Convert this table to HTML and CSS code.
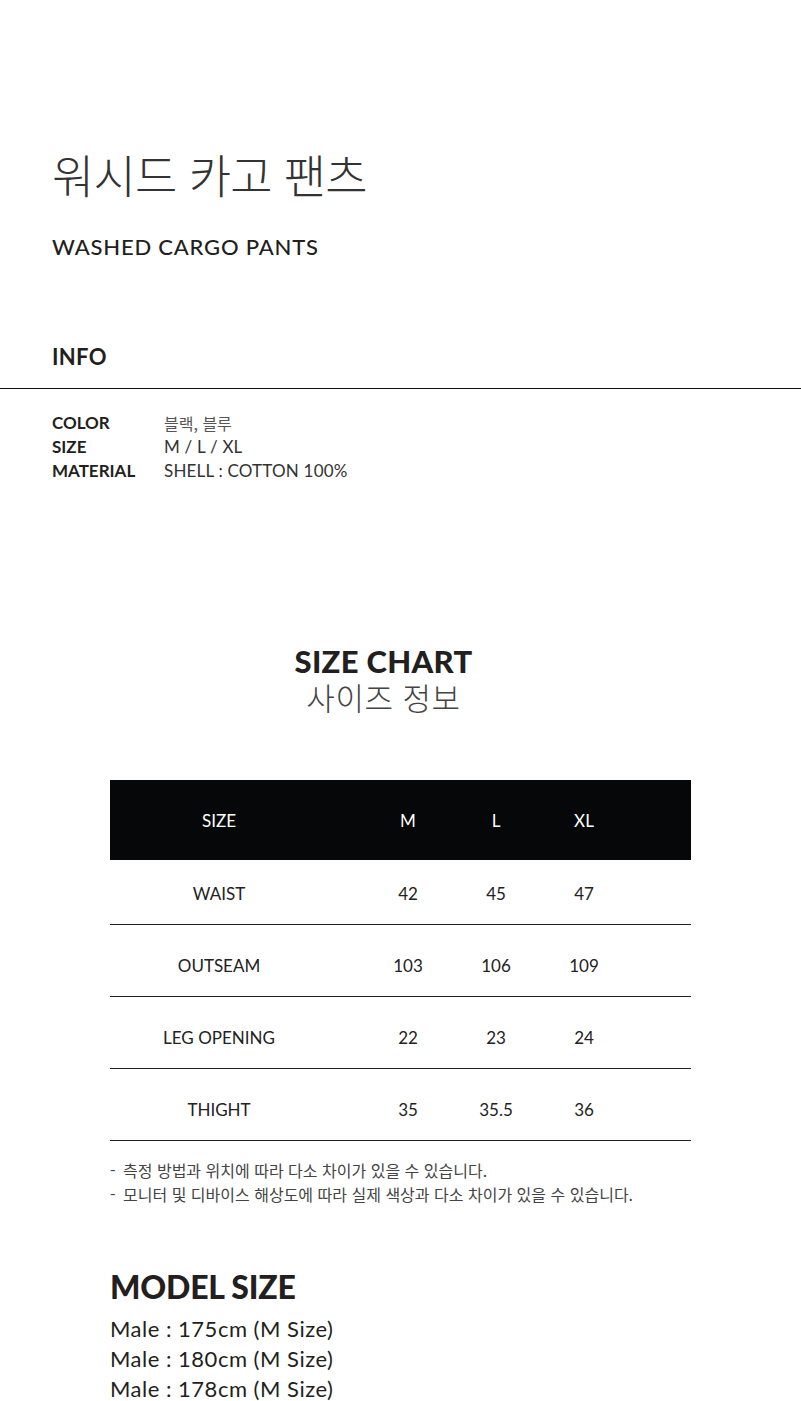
FILE: index.html
```html
<!DOCTYPE html>
<html lang="ko">
<head>
<meta charset="utf-8">
<link rel="stylesheet" href="styles.css">
</head>
<body>
<div class="page">
  <section class="intro">
    <h1 class="title-ko">워시드 카고 팬츠</h1>
    <p class="title-en">WASHED CARGO PANTS</p>
    <h2 class="info-head">INFO</h2>
  </section>
  <hr class="rule">
  <dl class="info-list">
    <dt>COLOR</dt><dd class="ko">블랙, 블루</dd>
    <dt>SIZE</dt><dd>M / L / XL</dd>
    <dt>MATERIAL</dt><dd>SHELL : COTTON 100%</dd>
  </dl>

  <section class="chart">
    <div class="chart-head">
      <h2 class="chart-en">SIZE CHART</h2>
      <p class="chart-ko">사이즈 정보</p>
    </div>
    <div class="table">
      <div class="row head">
        <span class="label">SIZE</span><span>M</span><span>L</span><span>XL</span>
      </div>
      <div class="row first">
        <span class="label">WAIST</span><span>42</span><span>45</span><span>47</span>
      </div>
      <div class="row">
        <span class="label">OUTSEAM</span><span>103</span><span>106</span><span>109</span>
      </div>
      <div class="row">
        <span class="label">LEG OPENING</span><span>22</span><span>23</span><span>24</span>
      </div>
      <div class="row">
        <span class="label">THIGHT</span><span>35</span><span>35.5</span><span>36</span>
      </div>
    </div>
    <ul class="notes">
      <li>측정 방법과 위치에 따라 다소 차이가 있을 수 있습니다.</li>
      <li>모니터 및 디바이스 해상도에 따라 실제 색상과 다소 차이가 있을 수 있습니다.</li>
    </ul>
    <h2 class="model-head">MODEL SIZE</h2>
    <p class="model-line">Male : 175cm (M Size)</p>
    <p class="model-line">Male : 180cm (M Size)</p>
    <p class="model-line">Male : 178cm (M Size)</p>
  </section>
</div>
</body>
</html>
```

FILE: styles.css
```css
* { box-sizing: border-box; }
html, body { margin: 0; padding: 0; background: #fff; }
body {
  font-family: "Lato", "Noto Sans CJK KR", sans-serif;
  color: #231f20;
}
.page { width: 801px; }

.intro { padding: 143px 52px 0; }
.title-ko {
  margin: 0;
  font-family: "Noto Sans CJK KR", sans-serif;
  font-weight: 300;
  font-size: 46px;
  line-height: 60px;
  color: #333;
  letter-spacing: -0.8px;
}
.title-en {
  margin: 30px 0 0;
  font-size: 22px;
  font-weight: 500;
  line-height: 28px;
  letter-spacing: 0.8px;
}
.info-head {
  margin: 82px 0 0;
  font-size: 22px;
  font-weight: 700;
  line-height: 28px;
  letter-spacing: 0.3px;
}
.rule {
  margin: 17px 0 0;
  border: 0;
  border-top: 1.5px solid #111;
  height: 0;
}
.info-list {
  margin: 0;
  padding: 22px 52px 0;
  display: grid;
  grid-template-columns: 112px 1fr;
  font-size: 17px;
  line-height: 24px;
}
.info-list dt { font-weight: 700; }
.info-list dd { margin: 0; color: #333; letter-spacing: 0.2px; }
.info-list dd.ko { font-family: "Noto Sans CJK KR", sans-serif; font-weight: 400; font-size: 16px; color: #555; letter-spacing: 0; }

.chart { padding: 0 110px; }
.chart-head {
  margin-top: 160px;
  padding-right: 34px;
  text-align: center;
}
.chart-en {
  margin: 0;
  font-size: 31px;
  font-weight: 900;
  line-height: 36px;
  letter-spacing: 0.3px;
}
.chart-ko {
  margin: 0;
  font-family: "Noto Sans CJK KR", sans-serif;
  font-weight: 300;
  font-size: 31px;
  line-height: 36px;
  color: #444;
  letter-spacing: 0.5px;
}

.table { margin-top: 65px; width: 581px; }
.row {
  display: grid;
  grid-template-columns: 254px 88px 88px 88px 1fr;
  align-items: center;
  height: 72px;
  padding-top: 10px;
  border-bottom: 1.5px solid #222;
  font-size: 17px;
  color: #222;
}
.row span { text-align: center; }
.row .label { padding-right: 36px; }
.row.head {
  height: 80px;
  padding-top: 0;
  background: #050709;
  color: #fff;
  border-bottom: 0;
}
.row.first { height: 65px; padding-top: 3px; }

.notes {
  margin: 17px 0 0;
  padding: 0;
  list-style: none;
  font-family: "Noto Sans CJK KR", sans-serif;
  font-size: 16px;
  line-height: 24px;
  color: #444;
}
.notes li::before { content: "-"; display: inline-block; width: 13px; }

.model-head {
  margin: 60px 0 0;
  font-size: 32px;
  font-weight: 900;
  line-height: 42px;
  letter-spacing: -0.2px;
}
.model-line {
  margin: 0;
  font-size: 22px;
  line-height: 30px;
  letter-spacing: 0.5px;
}
.model-head + .model-line { margin-top: 6px; }
```
